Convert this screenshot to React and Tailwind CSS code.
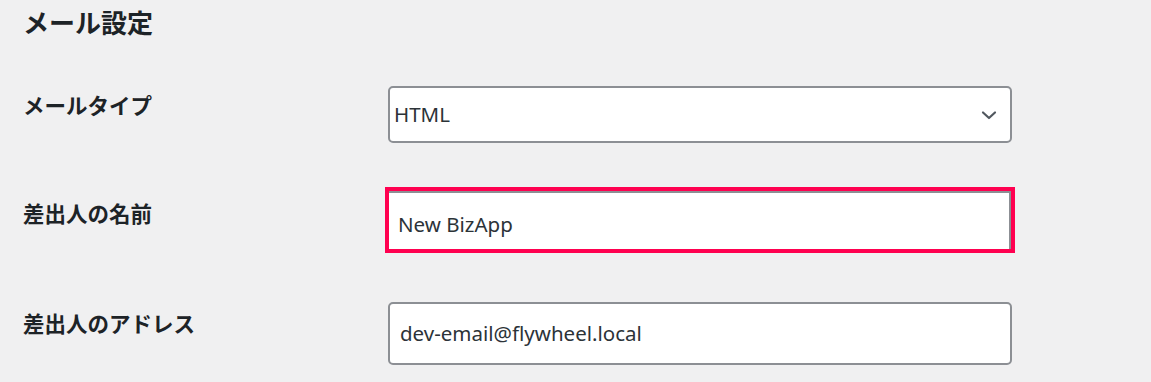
export default function App() {
  const label = "text-[21.5px] font-bold leading-[28px] text-[#1d2327]";
  const ff = { fontFamily: '"Noto Sans CJK JP", "Noto Sans", sans-serif' };
  const inputFont = { fontFamily: '"Noto Sans", "Open Sans", sans-serif' };
  return (
    <div className="min-h-[382px] w-[1151px] bg-[#f0f0f1] pl-[23px]" style={ff}>
      <h2 className="flex h-[42px] items-center text-[26px] font-bold text-[#1d2327]">メール設定</h2>

      <div className="grid grid-cols-[365px_624px] pt-[44px]">
        <div className={`${label} pt-[5px]`}>メールタイプ</div>
        <div className="flex h-[57px] items-center justify-between rounded-[5px] border-2 border-[#8c8f94] bg-white pl-[4px] pr-[12px] text-[20.5px] text-[#2c3338]" style={inputFont}>
          <span>HTML</span>
          <svg width="18" height="18" viewBox="0 0 18 18" fill="none">
            <path d="M3 6.5 L9 12 L15 6.5" stroke="#50575e" strokeWidth="2.2" strokeLinecap="round" strokeLinejoin="round" />
          </svg>
        </div>
      </div>

      <div className="grid grid-cols-[362px_630px] pt-[44px]">
        <div className={`${label} pt-[12px]`}>差出人の名前</div>
        <div className="h-[66px] border-[4px] border-[#ff0050] bg-white">
          <div className="flex h-full items-center border-r-2 border-t-2 border-[#8c8f94] pl-[9px] pt-[6px] text-[20.5px] text-[#2c3338]" style={inputFont}>
            New BizApp
          </div>
        </div>
      </div>

      <div className="grid grid-cols-[365px_624px] pt-[49px]">
        <div className={`${label} pt-[7px]`}>差出人のアドレス</div>
        <div className="flex h-[63px] items-center rounded-[5px] border-2 border-[#8c8f94] bg-white pl-[10px] text-[20.5px] text-[#2c3338]" style={inputFont}>
          dev-email@flywheel.local
        </div>
      </div>
    </div>
  );
}
